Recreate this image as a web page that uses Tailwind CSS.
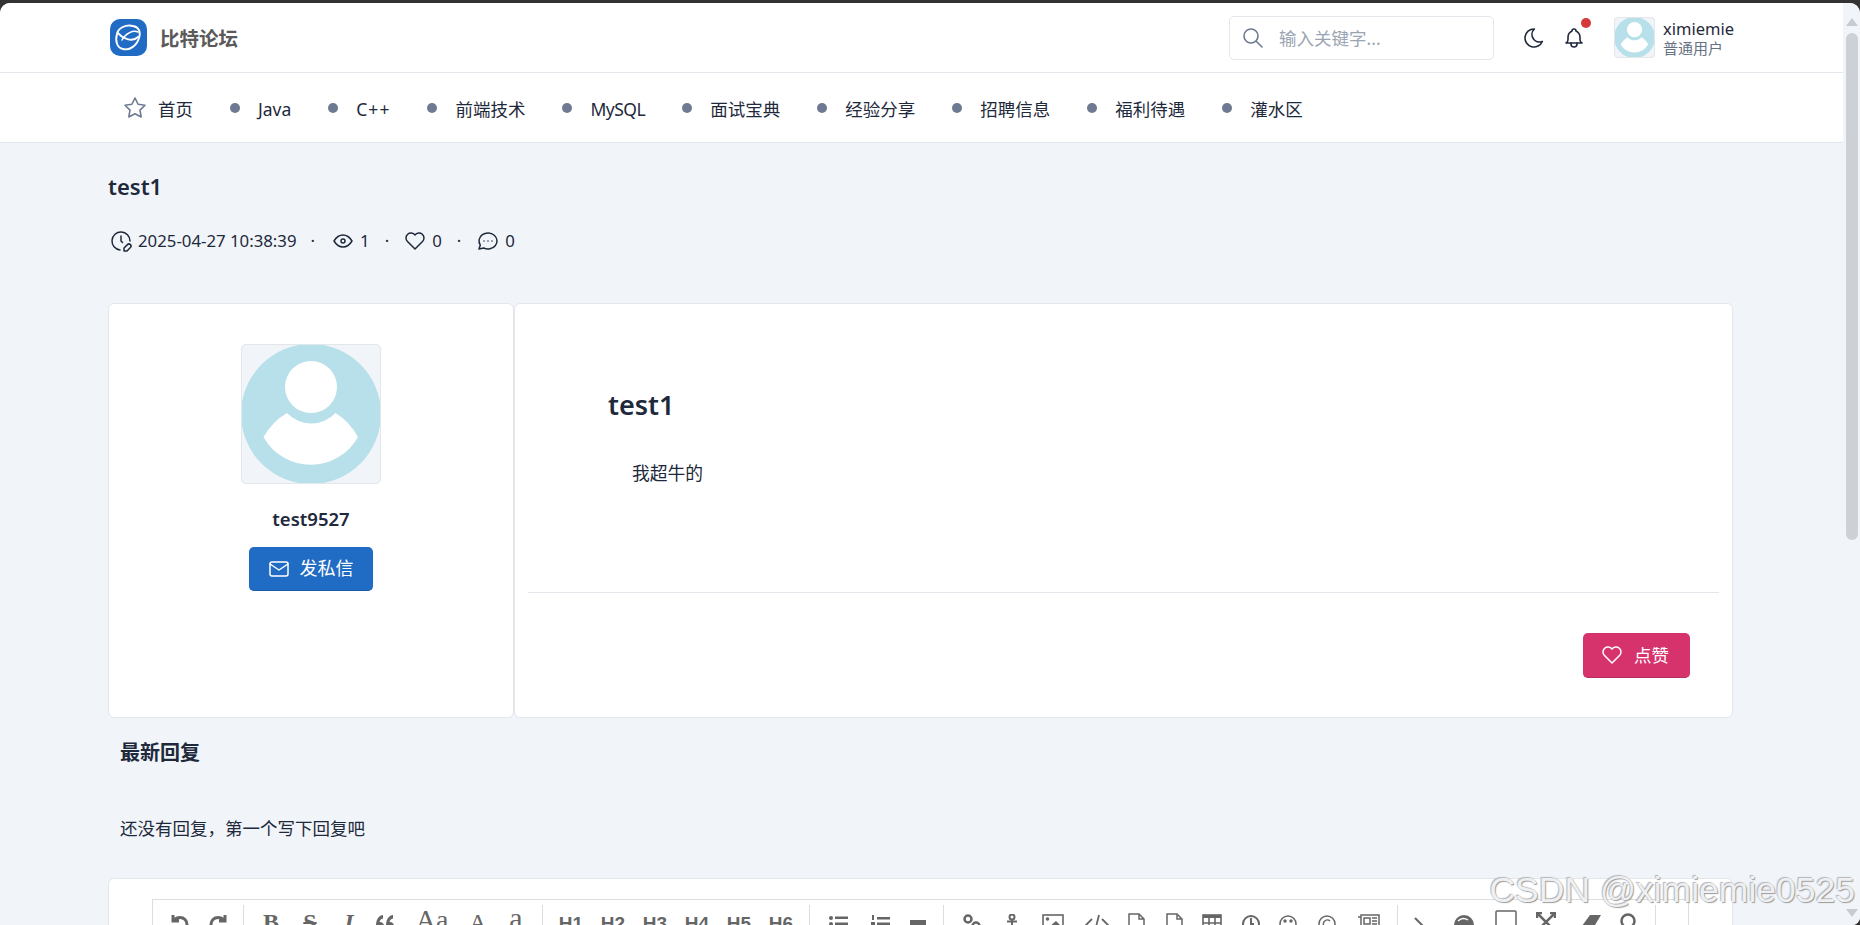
<!DOCTYPE html>
<html lang="zh-CN">
  <head>
    <meta charset="UTF-8" />
    <meta name="viewport" content="width=device-width, initial-scale=1.0" />
    <title>比特论坛</title>
    <script src="https://cdn.jsdelivr.net/npm/@tailwindcss/browser@4"></script>
  </head>
  <body class="h-screen overflow-hidden bg-[#333333] pt-[3px] font-['Noto_Sans','Noto_Sans_CJK_SC',sans-serif] text-[17.5px] text-[#1e293b]">
    <div class="relative flex h-full overflow-hidden rounded-t-[10px] rounded-br-[8px] bg-[#f1f5f9]">
      <main class="min-w-0 flex-1 overflow-hidden">
        <!-- header -->
        <header class="flex h-[70px] items-center border-b border-[#e3e6ea] bg-white pl-[110px] pr-[110px]">
          <svg class="h-[37px] w-[37px] shrink-0" viewBox="0 0 37 37" fill="none" stroke="#fff" stroke-width="1.9" stroke-linecap="round">
            <rect width="37" height="37" rx="10" fill="#206bc4" stroke="none" />
            <path d="M7 15C8 9 16 5 23 7C29 8 31 13 29 19C27 26 20 32 13 30C7 29 5 22 7 15Z" />
            <path d="M8 14C12 19 22 24 28 18" />
            <path d="M12 21C16 14 23 11 28 13" stroke-width="1.500" />
          </svg>
          <span class="ml-[13px] pt-[2px] text-[19.5px] font-bold text-[#5a5a5a]">比特论坛</span>
          <div class="ml-auto flex h-[44px] w-[265px] items-center rounded-[5px] border border-[#e3e6ea] pl-[11px]">
            <svg class="h-[24px] w-[24px] text-[#6e7a91]" viewBox="0 0 24 24" fill="none" stroke="currentColor" stroke-width="1.6" stroke-linecap="round" stroke-linejoin="round"><circle cx="10" cy="10" r="7" /><path d="M21 21l-6 -6" /></svg>
            <span class="ml-[14px] pt-[1px] text-[#9ba4b2]">输入关键字...</span>
          </div>
          <svg class="ml-[28px] h-[24px] w-[24px]" viewBox="0 0 24 24" fill="none" stroke="currentColor" stroke-width="1.6" stroke-linecap="round" stroke-linejoin="round"><path d="M12 3c.132 0 .263 0 .393 0a7.5 7.5 0 0 0 7.92 12.446a9 9 0 1 1 -8.313 -12.454z" /></svg>
          <div class="relative ml-[16px] h-[24px] w-[24px]">
            <svg class="h-[24px] w-[24px]" viewBox="0 0 24 24" fill="none" stroke="currentColor" stroke-width="1.6" stroke-linecap="round" stroke-linejoin="round"><path d="M10 5a2 2 0 1 1 4 0a7 7 0 0 1 4 6v3a4 4 0 0 0 2 3h-16a4 4 0 0 0 2 -3v-3a7 7 0 0 1 4 -6" /><path d="M9 17v1a3 3 0 0 0 6 0v-1" /></svg>
            <span class="absolute -top-[8px] right-[-5px] h-[10px] w-[10px] rounded-full bg-[#d63939]"></span>
          </div>
          <div class="relative ml-[28px] h-[41px] w-[41px] overflow-hidden rounded-[4px] bg-[#f1f5f9] outline outline-1 -outline-offset-1 outline-[#e3e6ea]">
            <svg class="h-[41px] w-[41px]" viewBox="0 0 140 140"><circle cx="70" cy="70" r="70" fill="#b8e0ea" /><circle cx="70" cy="43" r="26" fill="#fff" /><path d="M46 69A33 33 0 0 0 94.500 69Q108 77 117 93A54 54 0 0 1 22.500 93Q32 77 46 69Z" fill="#fff" /></svg>
          </div>
          <div class="ml-[8px] w-[70px]">
            <div class="text-[16.500px] leading-[20px]">ximiemie</div>
            <div class="text-[15px] leading-[18px] text-[#667382]">普通用户</div>
          </div>
        </header>

        <!-- nav -->
        <nav class="flex h-[70px] items-center gap-[37px] border-b border-[#e3e6ea] bg-white pl-[123px] pt-[3px]">
          <a class="flex items-center gap-[11px]">
            <svg class="-mt-[3px] h-[24px] w-[24px] text-[#6e7a91]" viewBox="0 0 24 24" fill="none" stroke="currentColor" stroke-width="1.6" stroke-linecap="round" stroke-linejoin="round"><path d="M12 17.750l-6.172 3.245l1.179 -6.873l-5 -4.867l6.900 -1l3.086 -6.253l3.086 6.253l6.900 1l-5 4.867l1.179 6.873z" /></svg>
            首页
          </a>
          <a class="flex items-center gap-[18px]"><span class="-mt-[3px] h-[10px] w-[10px] rounded-full bg-[#6e7a91]"></span>Java</a>
          <a class="flex items-center gap-[18px]"><span class="-mt-[3px] h-[10px] w-[10px] rounded-full bg-[#6e7a91]"></span><span class="tracking-[1px]">C++</span></a>
          <a class="flex items-center gap-[18px]"><span class="-mt-[3px] h-[10px] w-[10px] rounded-full bg-[#6e7a91]"></span>前端技术</a>
          <a class="flex items-center gap-[18px]"><span class="-mt-[3px] h-[10px] w-[10px] rounded-full bg-[#6e7a91]"></span><span class="tracking-[-0.5px]">MySQL</span></a>
          <a class="flex items-center gap-[18px]"><span class="-mt-[3px] h-[10px] w-[10px] rounded-full bg-[#6e7a91]"></span>面试宝典</a>
          <a class="flex items-center gap-[18px]"><span class="-mt-[3px] h-[10px] w-[10px] rounded-full bg-[#6e7a91]"></span>经验分享</a>
          <a class="flex items-center gap-[18px]"><span class="-mt-[3px] h-[10px] w-[10px] rounded-full bg-[#6e7a91]"></span>招聘信息</a>
          <a class="flex items-center gap-[18px]"><span class="-mt-[3px] h-[10px] w-[10px] rounded-full bg-[#6e7a91]"></span>福利待遇</a>
          <a class="flex items-center gap-[18px]"><span class="-mt-[3px] h-[10px] w-[10px] rounded-full bg-[#6e7a91]"></span>灌水区</a>
        </nav>

        <div class="pl-[108px] pr-[110px]">
          <!-- post title -->
          <h2 class="mt-[27px] text-[22px] font-semibold leading-[32px]">test1</h2>
          <div class="mt-[27px] flex h-[24px] items-center text-[16.8px]">
            <svg class="ml-[1px] h-[24px] w-[24px]" viewBox="0 0 24 24" fill="none" stroke="currentColor" stroke-width="1.500" stroke-linecap="round" stroke-linejoin="round"><path d="M21 12a9 9 0 1 0 -9.972 8.948" /><path d="M12 7v5l1.500 1.500" /><path d="M18.420 15.610a2.100 2.100 0 0 1 2.970 2.970l-3.390 3.420h-3v-3l3.420 -3.390z" /></svg>
            <span class="ml-[5px]">2025-04-27 10:38:39</span>
            <span class="ml-[14px]">·</span>
            <svg class="ml-[16px] h-[24px] w-[24px]" viewBox="0 0 24 24" fill="none" stroke="currentColor" stroke-width="1.500" stroke-linecap="round" stroke-linejoin="round"><path d="M10 12a2 2 0 1 0 4 0a2 2 0 0 0 -4 0" /><path d="M21 12c-2.400 4 -5.400 6 -9 6c-3.600 0 -6.600 -2 -9 -6c2.400 -4 5.400 -6 9 -6c3.600 0 6.600 2 9 6" /></svg>
            <span class="ml-[5px]">1</span>
            <span class="ml-[15px]">·</span>
            <svg class="ml-[14px] h-[24px] w-[24px]" viewBox="0 0 24 24" fill="none" stroke="currentColor" stroke-width="1.500" stroke-linecap="round" stroke-linejoin="round"><path d="M19.500 12.572l-7.500 7.428l-7.500 -7.428a5 5 0 1 1 7.500 -6.566a5 5 0 1 1 7.500 6.572" /></svg>
            <span class="ml-[5px]">0</span>
            <span class="ml-[15px]">·</span>
            <svg class="ml-[15px] h-[24px] w-[24px]" viewBox="0 0 24 24" fill="none" stroke="currentColor" stroke-width="1.500" stroke-linecap="round" stroke-linejoin="round"><path d="M3 20l1.300 -3.900c-2.324 -3.437 -1.426 -7.872 2.100 -10.374c3.526 -2.501 8.590 -2.296 11.845 .48c3.255 2.777 3.695 7.266 1.029 10.501c-2.666 3.235 -7.615 4.215 -11.574 2.293l-4.700 1" /><path d="M12 12l0 .01M8 12l0 .01M16 12l0 .01" /></svg>
            <span class="ml-[5px]">0</span>
          </div>

          <!-- post -->
          <div class="mt-[50px] flex h-[415px]">
            <section class="flex w-[406px] shrink-0 flex-col items-center rounded-[6px] border border-[#e3e6ea] bg-white pt-[40px]">
              <div class="h-[140px] w-[140px] overflow-hidden rounded-[5px] bg-[#f1f5f9] outline outline-1 -outline-offset-1 outline-[#e3e6ea]">
                <svg class="h-[140px] w-[140px]" viewBox="0 0 140 140"><circle cx="70" cy="70" r="70" fill="#b8e0ea" /><circle cx="70" cy="43" r="26" fill="#fff" /><path d="M46 69A33 33 0 0 0 94.500 69Q108 77 117 93A54 54 0 0 1 22.500 93Q32 77 46 69Z" fill="#fff" /></svg>
              </div>
              <div class="mt-[22px] text-[18.5px] font-semibold leading-[26px]">test9527</div>
              <a class="mt-[15px] flex h-[44px] w-[124px] items-center justify-center gap-[9px] rounded-[5px] border-b border-[#1b5ba8] bg-[#206bc4] pr-[2px] text-[18px] text-white">
                <svg class="h-[24px] w-[24px]" viewBox="0 0 24 24" fill="none" stroke="currentColor" stroke-width="1.500" stroke-linecap="round" stroke-linejoin="round"><rect x="3" y="5" width="18" height="14" rx="2" /><path d="M3 7l9 6l9 -6" /></svg>
                发私信
              </a>
            </section>
            <section class="flex min-w-0 flex-1 flex-col rounded-[6px] border border-[#e3e6ea] bg-white">
              <h1 class="ml-[93px] mt-[82px] text-[27px] font-semibold leading-[38px]">test1</h1>
              <p class="ml-[117px] mt-[36px] text-[17.8px] leading-[26px]">我超牛的</p>
              <div class="mx-[13px] mt-[106px] border-t border-[#e3e6ea]"></div>
              <div class="mt-[40px] flex justify-end pr-[42px]">
                <a class="flex h-[45px] w-[107px] items-center justify-center gap-[10px] rounded-[5px] border-b border-[#b82c5d] bg-[#d6336c] pr-[4px] text-white">
                  <svg class="h-[24px] w-[24px]" viewBox="0 0 24 24" fill="none" stroke="currentColor" stroke-width="1.500" stroke-linecap="round" stroke-linejoin="round"><path d="M19.500 12.572l-7.500 7.428l-7.500 -7.428a5 5 0 1 1 7.500 -6.566a5 5 0 1 1 7.500 6.572" /></svg>
                  点赞
                </a>
              </div>
            </section>
          </div>

          <!-- replies -->
          <h3 class="ml-[12px] mt-[20px] text-[20px] font-semibold leading-[30px]">最新回复</h3>
          <p class="ml-[12px] mt-[47px] leading-[26px]">还没有回复，第一个写下回复吧</p>

          <!-- editor -->
          <div class="mt-[37px] h-[200px] rounded-t-[6px] border border-[#e3e6ea] bg-white pl-[43px] pr-[43px] pt-[20px]">
            <div class="flex h-[100px] items-start border border-[#dddddd] pl-[7px] pt-[5px] font-['Liberation_Sans',sans-serif] text-[#666666]">
              <svg class="mt-[8px] h-[18px] w-[39px]" viewBox="0 0 39 18" fill="none" stroke="currentColor" stroke-width="3"><path d="M13 2v6h6M13.500 7.500c2-2 4-3 6.500-3c4 0 7 3 7 7c0 3-1 5-3 6.500" /></svg>
              <svg class="mt-[8px] h-[18px] w-[39px]" viewBox="0 0 39 18" fill="none" stroke="currentColor" stroke-width="3"><path d="M26 2v6h-6M25.500 7.500c-2-2-4-3-6.500-3c-4 0-7 3-7 7c0 3 1 5 3 6.500" /></svg>
              <span class="ml-[5px] h-[40px] w-px bg-[#dddddd]"></span>
              <span class="ml-[8px] mt-[5px] w-[38px] text-center font-['Liberation_Serif',serif] text-[24px] font-bold leading-[24px]">B</span>
              <span class="mt-[5px] w-[40px] text-center font-['Liberation_Serif',serif] text-[24px] font-bold leading-[24px] line-through">S</span>
              <span class="mt-[5px] w-[38px] text-center font-['Liberation_Serif',serif] text-[24px] font-bold italic leading-[24px]">I</span>
              <svg class="mt-[9px] h-[18px] w-[34px]" viewBox="0 0 34 18" fill="currentColor"><path d="M8 12a4 4 0 1 0 8 0a4 4 0 0 0 -4.500 -4c.3-2 1.500-3 3.500-3.500V1c-4 .5-7 4-7 11zM18 12a4 4 0 1 0 8 0a4 4 0 0 0 -4.500 -4c.3-2 1.500-3 3.500-3.500V1c-4 .5-7 4-7 11z" /></svg>
              <span class="mt-[1px] w-[60px] text-center font-['Liberation_Serif',serif] text-[28px] leading-[28px]">Aa</span>
              <span class="mt-[5px] w-[32px] text-center font-['Liberation_Serif',serif] text-[24px] leading-[24px]">A</span>
              <span class="-mt-[2px] w-[44px] text-center font-['Liberation_Serif',serif] text-[30px] leading-[30px]">a</span>
              <span class="ml-[4px] h-[40px] w-px bg-[#dddddd]"></span>
              <span class="ml-[7px] mt-[9px] w-[42px] text-center text-[19px] font-bold leading-[20px]">H1</span>
              <span class="mt-[9px] w-[42px] text-center text-[19px] font-bold leading-[20px]">H2</span>
              <span class="mt-[9px] w-[42px] text-center text-[19px] font-bold leading-[20px]">H3</span>
              <span class="mt-[9px] w-[42px] text-center text-[19px] font-bold leading-[20px]">H4</span>
              <span class="mt-[9px] w-[42px] text-center text-[19px] font-bold leading-[20px]">H5</span>
              <span class="mt-[9px] w-[42px] text-center text-[19px] font-bold leading-[20px]">H6</span>
              <span class="ml-[7px] h-[40px] w-px bg-[#dddddd]"></span>
              <svg class="ml-[7px] mt-[10px] h-[18px] w-[42px]" viewBox="0 0 42 18" fill="currentColor"><circle cx="14" cy="3" r="2" /><rect x="18" y="1.500" width="13" height="2.500" /><circle cx="14" cy="9" r="2" /><rect x="18" y="7.500" width="13" height="2.500" /></svg>
              <svg class="mt-[9px] h-[18px] w-[42px]" viewBox="0 0 42 18" fill="currentColor"><rect x="13" y="1" width="2" height="5" /><rect x="18" y="3" width="13" height="2.500" /><rect x="12" y="8" width="4" height="3" /><rect x="18" y="8.500" width="13" height="2.500" /></svg>
              <svg class="mt-[9px] h-[18px] w-[34px]" viewBox="0 0 34 18" fill="currentColor"><rect x="9" y="6" width="16" height="5" /></svg>
              <span class="ml-[8px] h-[40px] w-px bg-[#dddddd]"></span>
              <svg class="ml-[8px] mt-[9px] h-[18px] w-[40px]" viewBox="0 0 40 18" fill="none" stroke="currentColor" stroke-width="2.500"><circle cx="16" cy="5" r="3.500" /><circle cx="24" cy="12" r="3.500" /></svg>
              <svg class="mt-[9px] h-[18px] w-[40px]" viewBox="0 0 40 18" fill="currentColor"><circle cx="20" cy="3" r="2.500" fill="none" stroke="currentColor" stroke-width="2" /><rect x="15" y="6.500" width="10" height="2" /><rect x="19" y="6" width="2" height="12" /></svg>
              <svg class="mt-[9px] h-[18px] w-[42px]" viewBox="0 0 42 18" fill="none" stroke="currentColor" stroke-width="1.600"><rect x="11" y="1" width="20" height="16" /><circle cx="15.500" cy="5" r="1.800" fill="currentColor" stroke="none" /><path d="M17 13l7-6l6 6z" fill="currentColor" stroke="none" /></svg>
              <svg class="mt-[9px] h-[18px] w-[46px]" viewBox="0 0 46 18" fill="none" stroke="currentColor" stroke-width="1.800"><path d="M18 5l-6 6l6 6M28 5l6 6l-6 6M25 1l-4 16" /></svg>
              <svg class="mt-[8px] h-[18px] w-[32px]" viewBox="0 0 32 18" fill="none" stroke="currentColor" stroke-width="1.500"><path d="M9 18V1h10l5 5v12M19 1v5h5M13 13l-2 2l2 2M19 13l2 2l-2 2" /></svg>
              <svg class="mt-[8px] h-[18px] w-[44px]" viewBox="0 0 44 18" fill="none" stroke="currentColor" stroke-width="1.500"><path d="M15 18V1h10l5 5v12M25 1v5h5M19 13l-2 2l2 2M25 13l2 2l-2 2" /></svg>
              <svg class="mt-[9px] h-[18px] w-[32px]" viewBox="0 0 32 18" fill="none" stroke="currentColor" stroke-width="1.600"><rect x="7" y="1" width="18" height="16" /><rect x="7" y="1" width="18" height="3" fill="currentColor" stroke="none" /><path d="M13 1v16M19 1v16M7 9h18" /></svg>
              <svg class="mt-[10px] h-[18px] w-[46px]" viewBox="0 0 46 18" fill="none" stroke="currentColor" stroke-width="2"><circle cx="23" cy="9" r="8" /><path d="M23 3v6h3" /></svg>
              <svg class="mt-[10px] h-[18px] w-[28px]" viewBox="0 0 28 18" fill="none" stroke="currentColor" stroke-width="1.500"><circle cx="14" cy="9" r="8" /><circle cx="11" cy="6" r="1" fill="currentColor" /><circle cx="17" cy="6" r="1" fill="currentColor" /></svg>
              <svg class="mt-[10px] h-[18px] w-[50px]" viewBox="0 0 50 18" fill="none" stroke="currentColor" stroke-width="1.500"><circle cx="25" cy="9" r="8" /><path d="M28 6a4 4 0 1 0 0 6" /></svg>
              <svg class="mt-[9px] h-[18px] w-[32px]" viewBox="0 0 32 18" fill="none" stroke="currentColor" stroke-width="1.500"><path d="M6 3h3M9 1h18v16H9z" /><rect x="12" y="4" width="6" height="6" /><path d="M20 4h5M20 7h5M20 10h5" /></svg>
              <span class="ml-[13px] h-[40px] w-px bg-[#dddddd]"></span>
              <svg class="ml-[7px] mt-[12px] h-[18px] w-[28px]" viewBox="0 0 28 18" fill="none" stroke="currentColor" stroke-width="2"><path d="M10 1l8 8l-8 8" /></svg>
              <svg class="ml-[17px] mt-[10px] h-[18px] w-[28px]" viewBox="0 0 28 18"><circle cx="14" cy="10" r="10" fill="currentColor" /><path d="M8 6c3-3 7-3 10-1" fill="none" stroke="#fff" stroke-width="1.500" /></svg>
              <svg class="ml-[16px] mt-[5px] h-[24px] w-[24px]" viewBox="0 0 24 24" fill="none" stroke="currentColor" stroke-width="1.500"><rect x="2" y="1" width="20" height="22" rx="1" /></svg>
              <svg class="ml-[18px] mt-[7px] h-[20px] w-[20px]" viewBox="0 0 20 20" fill="none" stroke="currentColor" stroke-width="2.500"><path d="M1 1l18 18M19 1L1 19" /><path d="M1 6V1h5M19 6V1h-5" /></svg>
              <svg class="ml-[21px] mt-[9px] h-[18px] w-[24px]" viewBox="0 0 24 18" fill="currentColor"><path d="M13 1h11l-9 15H2z" /></svg>
              <svg class="ml-[15px] mt-[8px] h-[18px] w-[24px]" viewBox="0 0 24 18" fill="none" stroke="currentColor" stroke-width="2.500"><circle cx="12" cy="8" r="6.500" /></svg>
              <span class="ml-[15px] h-[40px] w-px bg-[#dddddd]"></span>
            </div>
          </div>
        </div>
      </main>

      <!-- scrollbar -->
      <aside class="relative flex w-[17px] shrink-0 flex-col items-center bg-[#f1f5f9]">
        <svg class="mt-[15px] h-[8px] w-[12px]" viewBox="0 0 12 8"><path d="M6 0l6 8H0z" fill="#c7ccd2" /></svg>
        <div class="mt-[7px] h-[507px] w-[12px] rounded-[6px] bg-[#cdd1d6]"></div>
        <svg class="mt-auto mb-[8px] h-[8px] w-[12px]" viewBox="0 0 12 8"><path d="M6 8l6-8H0z" fill="#c7ccd2" /></svg>
      </aside>

      <!-- watermark -->
      <span class="absolute right-[5px] top-[867px] font-['Liberation_Sans',sans-serif] text-[35.5px] leading-[40px] text-[#eef0f3] [text-shadow:1px_1px_1px_#9a9a9a,-1px_-1px_1px_#b5b5b5]">CSDN @ximiemie0525</span>
    </div>
  </body>
</html>
